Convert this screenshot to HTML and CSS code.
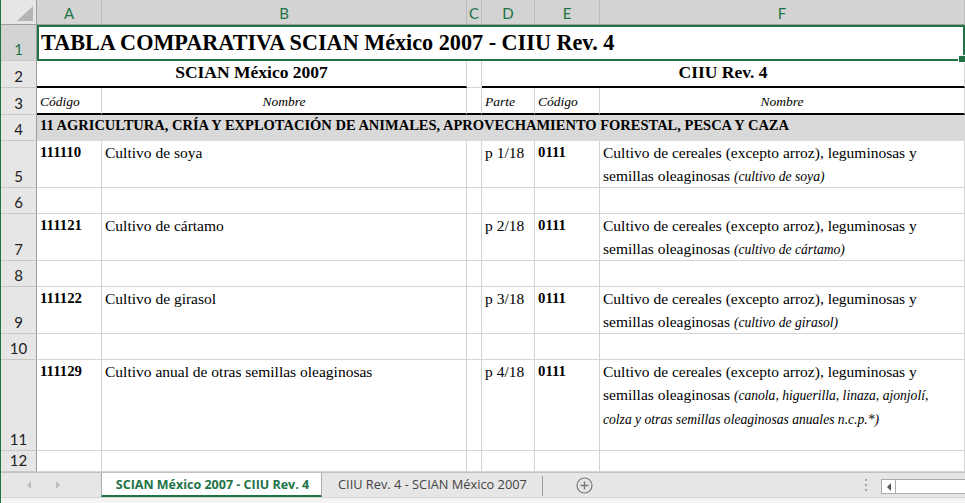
FILE: index.html
```html
<!DOCTYPE html>
<html lang="es">
<head>
<meta charset="utf-8">
<title>TABLA COMPARATIVA SCIAN México 2007 - CIIU Rev. 4</title>
<link rel="stylesheet" href="styles.css">
</head>
<body>
<div class="app">
  <div class="sheet">
    <!-- column headers -->
    <div class="corner"><svg width="16" height="15" viewBox="0 0 16 15"><polygon points="16,0 16,15 0,15" fill="#b4b4b4"/></svg></div>
    <div class="ch">A</div>
    <div class="ch">B</div>
    <div class="ch">C</div>
    <div class="ch">D</div>
    <div class="ch">E</div>
    <div class="ch">F</div>

    <!-- row 1 -->
    <div class="rh sel">1</div>
    <div class="c title">TABLA COMPARATIVA SCIAN México 2007 - CIIU Rev. 4</div>

    <!-- row 2 -->
    <div class="rh">2</div>
    <div class="c h2 span2">SCIAN México 2007</div>
    <div class="c"></div>
    <div class="c h2 span3">CIIU Rev. 4</div>

    <!-- row 3 -->
    <div class="rh">3</div>
    <div class="c h3">Código</div>
    <div class="c h3 center">Nombre</div>
    <div class="c h3"></div>
    <div class="c h3">Parte</div>
    <div class="c h3">Código</div>
    <div class="c h3 center">Nombre</div>

    <!-- row 4 -->
    <div class="rh">4</div>
    <div class="c sect">11 AGRICULTURA, CRÍA Y EXPLOTACIÓN DE ANIMALES, APROVECHAMIENTO FORESTAL, PESCA Y CAZA</div>

    <!-- row 5 -->
    <div class="rh">5</div>
    <div class="c d code">111110</div>
    <div class="c d">Cultivo de soya</div>
    <div class="c"></div>
    <div class="c d">p 1/18</div>
    <div class="c d code">0111</div>
    <div class="c d">Cultivo de cereales (excepto arroz), leguminosas y<br>semillas oleaginosas <i>(cultivo de soya)</i></div>

    <!-- row 6 -->
    <div class="rh">6</div>
    <div class="c"></div><div class="c"></div><div class="c"></div><div class="c"></div><div class="c"></div><div class="c"></div>

    <!-- row 7 -->
    <div class="rh">7</div>
    <div class="c d code">111121</div>
    <div class="c d">Cultivo de cártamo</div>
    <div class="c"></div>
    <div class="c d">p 2/18</div>
    <div class="c d code">0111</div>
    <div class="c d">Cultivo de cereales (excepto arroz), leguminosas y<br>semillas oleaginosas <i>(cultivo de cártamo)</i></div>

    <!-- row 8 -->
    <div class="rh">8</div>
    <div class="c"></div><div class="c"></div><div class="c"></div><div class="c"></div><div class="c"></div><div class="c"></div>

    <!-- row 9 -->
    <div class="rh">9</div>
    <div class="c d code">111122</div>
    <div class="c d">Cultivo de girasol</div>
    <div class="c"></div>
    <div class="c d">p 3/18</div>
    <div class="c d code">0111</div>
    <div class="c d">Cultivo de cereales (excepto arroz), leguminosas y<br>semillas oleaginosas <i>(cultivo de girasol)</i></div>

    <!-- row 10 -->
    <div class="rh">10</div>
    <div class="c"></div><div class="c"></div><div class="c"></div><div class="c"></div><div class="c"></div><div class="c"></div>

    <!-- row 11 -->
    <div class="rh">11</div>
    <div class="c d code">111129</div>
    <div class="c d">Cultivo anual de otras semillas oleaginosas</div>
    <div class="c"></div>
    <div class="c d">p 4/18</div>
    <div class="c d code">0111</div>
    <div class="c d">Cultivo de cereales (excepto arroz), leguminosas y<br>semillas oleaginosas <i>(canola, higuerilla, linaza, ajonjolí,</i><br><i>colza y otras semillas oleaginosas anuales n.c.p.*)</i></div>

    <!-- row 12 -->
    <div class="rh">12</div>
    <div class="c"></div><div class="c"></div><div class="c"></div><div class="c"></div><div class="c"></div><div class="c"></div>
  </div>

  <div class="tabbar">
    <div class="nav">
      <span class="tri"></span>
      <span class="tri right"></span>
    </div>
    <div class="tab active">SCIAN México 2007 - CIIU Rev. 4</div>
    <div class="tab">CIIU Rev. 4 - SCIAN México 2007</div>
    <div class="sep"></div>
    <div class="add">
      <svg width="17" height="17" viewBox="0 0 17 17"><circle cx="8.5" cy="8.5" r="7.5" fill="none" stroke="#7a7a7a" stroke-width="1.2"/><path d="M8.5 4.5v8M4.5 8.5h8" stroke="#7a7a7a" stroke-width="1.4"/></svg>
    </div>
    <div class="spacer"></div>
    <div class="dots"><span></span><span></span><span></span></div>
    <div class="hscroll">
      <div class="sbtn"><span class="sarrow"></span></div>
      <div class="strack"></div>
    </div>
  </div>
  <div class="status"></div>
</div>
</body>
</html>
```

FILE: styles.css
```css
* {
  box-sizing: border-box;
  margin: 0;
  padding: 0;
}

html, body {
  width: 965px;
  height: 503px;
  overflow: hidden;
  background: #ffffff;
}

body {
  font-family: "Liberation Serif", serif;
  color: #000;
}

.app {
  display: flex;
  flex-direction: column;
  height: 503px;
  border-left: 1px solid #217346;
}

.sheet {
  display: grid;
  grid-template-columns: 36px 65px 365px 15px 53px 65px 1fr;
  grid-template-rows: 25px 36px 27px 27px 26px 47px 26px 47px 26px 47px 26px 91px 21px;
  height: 472px;
  flex: none;
  overflow: hidden;
}

/* headers */
.corner {
  background: #e6e6e6;
  border-right: 1px solid #9e9e9e;
  border-bottom: 1px solid #9e9e9e;
  display: flex;
  align-items: flex-end;
  justify-content: flex-end;
  padding: 0 3px 3px 0;
}

.ch {
  background: #d3d3d3;
  color: #217346;
  font-family: "Lato", "Liberation Sans", sans-serif;
  font-size: 15px;
  display: flex;
  align-items: center;
  justify-content: center;
  border-right: 1px solid #bcbcbc;
  border-bottom: 1px solid #9e9e9e;
  padding-top: 1px;
}

.rh {
  background: #e6e6e6;
  color: #222;
  font-family: "Lato", "Liberation Sans", sans-serif;
  font-size: 15px;
  line-height: 17px;
  display: flex;
  align-items: flex-end;
  justify-content: center;
  padding-bottom: 2px;
  border-right: 1px solid #9e9e9e;
  border-bottom: 1px solid #c8c8c8;
}

.rh.sel {
  background: #d3d3d3;
  color: #217346;
}

/* cells */
.c {
  border-right: 1px solid #d4d4d4;
  border-bottom: 1px solid #d4d4d4;
  padding: 0 3px;
  white-space: nowrap;
  overflow: hidden;
  display: flex;
}

.title {
  grid-column: 2 / span 6;
  position: relative;
  overflow: visible;
  outline: 2px solid #217346;
  outline-offset: -2px;
  font-weight: bold;
  font-size: 22.2px;
  align-items: center;
  padding-left: 4px;
  padding-top: 1px;
  z-index: 1;
}

.title::after {
  content: "";
  position: absolute;
  right: -2px;
  bottom: -3px;
  width: 6px;
  height: 6px;
  background: #217346;
  border: 1px solid #fff;
}

.span2 { grid-column: span 2; }
.span3 { grid-column: span 3; }

.h2 {
  font-weight: bold;
  font-size: 17.5px;
  justify-content: center;
  align-items: flex-end;
  padding-bottom: 3px;
  border-bottom: 2px solid #000;
}

.h3 {
  font-style: italic;
  font-size: 13.5px;
  align-items: flex-end;
  padding-bottom: 3px;
  border-bottom: 2px solid #000;
}

.center { justify-content: center; }

.sect {
  grid-column: 2 / span 6;
  background: #d9d9d9;
  border-right: none;
  border-bottom-color: #d9d9d9;
  font-weight: bold;
  font-size: 14.5px;
  line-height: 17px;
  align-items: flex-start;
  padding-top: 2px;
}

.d {
  display: block;
  font-size: 15.5px;
  line-height: 23px;
}

.d i {
  font-size: 13.6px;
}

.code {
  font-weight: bold;
  font-size: 14.8px;
}

/* tab bar */
.tabbar {
  height: 25px;
  flex: none;
  display: flex;
  align-items: stretch;
  background: #e6e6e6;
  border-top: 1px solid #c2c2c2;
  font-family: "Open Sans", "Liberation Sans", sans-serif;
  font-size: 12.5px;
}

.nav {
  width: 100px;
  flex: none;
  display: flex;
  align-items: center;
  padding-left: 26px;
  gap: 25px;
}

.tri {
  width: 0;
  height: 0;
  border-top: 4px solid transparent;
  border-bottom: 4px solid transparent;
  border-right: 4px solid #bdbdbd;
}

.tri.right {
  border-right: none;
  border-left: 4px solid #bdbdbd;
}

.tab {
  display: flex;
  align-items: center;
  padding: 0 15px 2px 16px;
  color: #444;
  white-space: nowrap;
  font-size: 12.8px;
}

.tab.active {
  width: 221px;
  justify-content: center;
  padding: 0 0 0 2px;
  background: #fff;
  color: #217346;
  font-weight: bold;
  font-size: 12.5px;
  border-left: 1px solid #ababab;
  border-right: 1px solid #ababab;
  border-bottom: 2px solid #217346;
}

.sep {
  width: 1px;
  background: #9a9a9a;
  margin: 3px 0 1px;
}

.add {
  display: flex;
  align-items: center;
  padding-left: 33px;
}

.spacer { flex: 1; }

.dots {
  display: flex;
  flex-direction: column;
  justify-content: center;
  gap: 3px;
  width: 2px;
  margin-right: 14px;
}

.dots span {
  width: 2px;
  height: 2px;
  background: #a6a6a6;
}

.hscroll {
  width: 84px;
  flex: none;
  display: flex;
  margin: 6px 0 3px;
  background: #fff;
  border: 1px solid #ababab;
  border-right: none;
}

.sbtn {
  width: 14px;
  border-right: 1px solid #ababab;
  display: flex;
  align-items: center;
  justify-content: center;
}

.sarrow {
  width: 0;
  height: 0;
  border-top: 4px solid transparent;
  border-bottom: 4px solid transparent;
  border-right: 4px solid #555;
}

.strack { flex: 1; }

.status {
  flex: 1;
  background: #f3f3f3;
  border-top: 1px solid #d4d4d4;
}
```
